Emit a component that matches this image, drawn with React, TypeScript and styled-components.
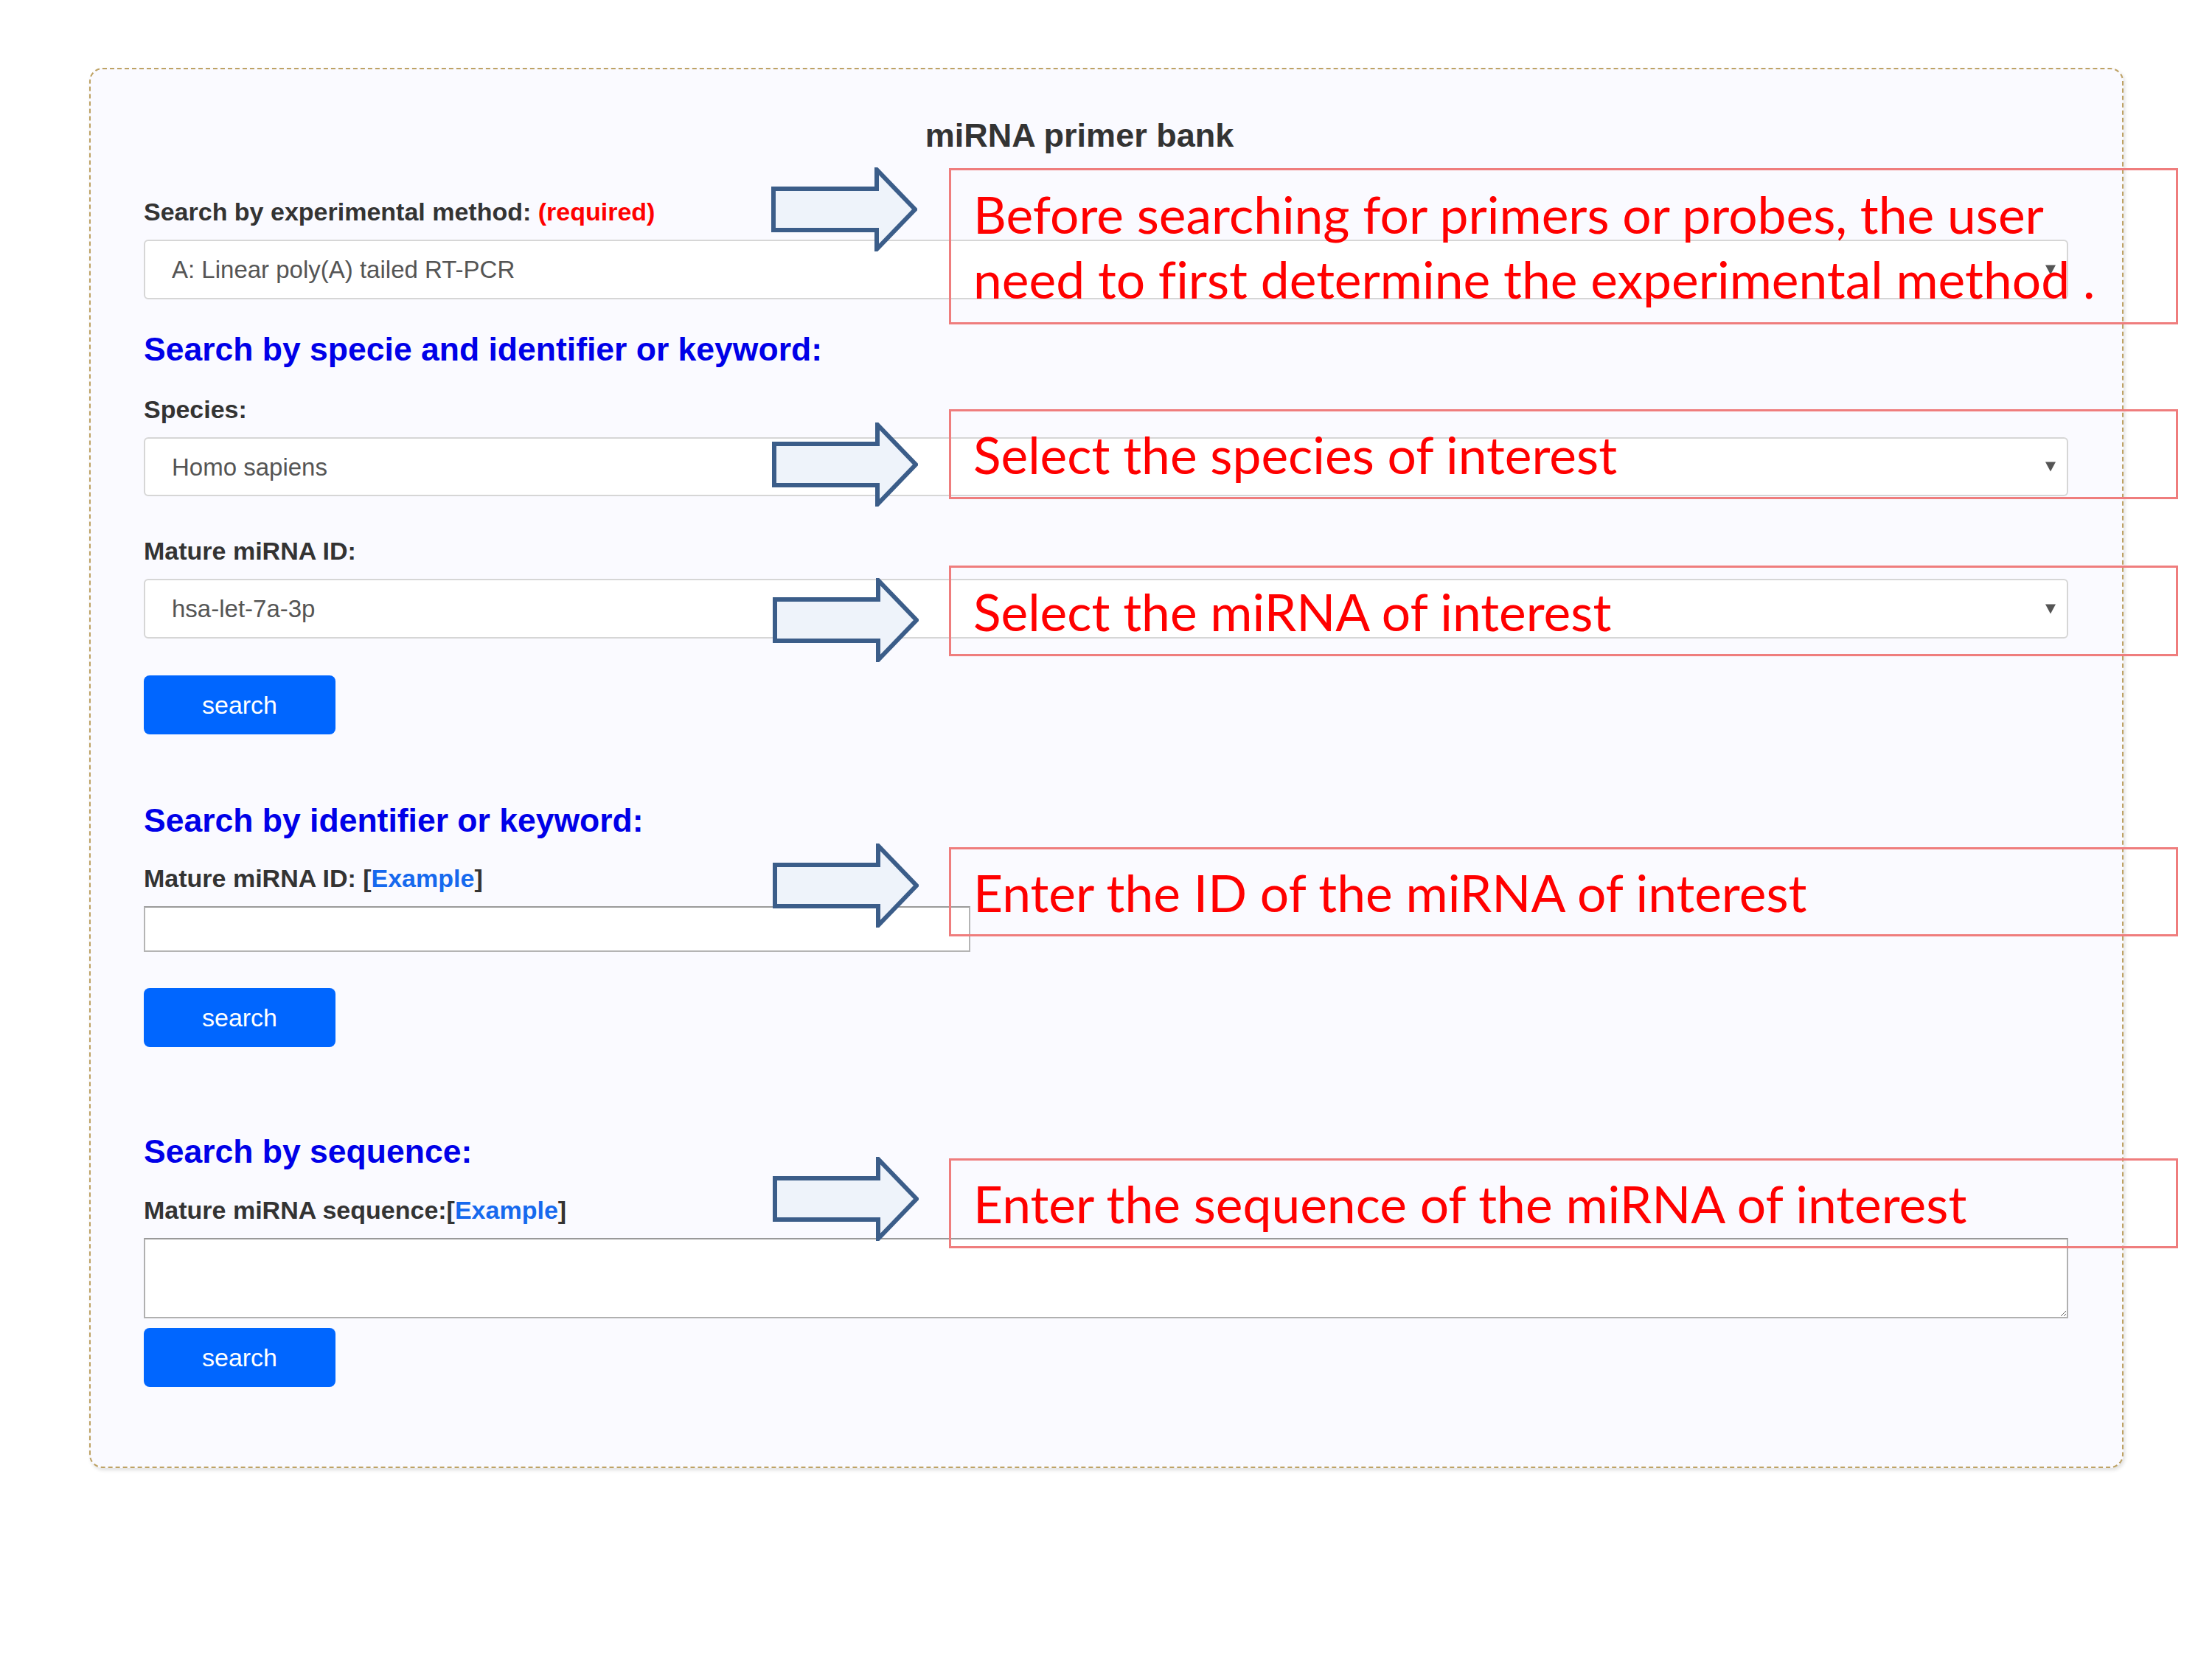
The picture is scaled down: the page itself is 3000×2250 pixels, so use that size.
import React from "react";
import styled, { createGlobalStyle } from "styled-components";

const GlobalStyle = createGlobalStyle`
    html, body {
        margin: 0;
        padding: 0;
        background: #ffffff;
    }
    * {
        box-sizing: border-box;
    }
`

export const Page = styled.div`
    position: relative;
    width: 3000px;
    height: 2250px;
    padding: 92px 0 0 121px;
    font-family: "Liberation Sans", Arial, sans-serif;
`

export const Panel = styled.div`
    width: 2759px;
    background-color: #fafaff;
    border: 2px dashed #bea264;
    border-radius: 18px;
    padding: 63px 73px 108px 72px;
    box-shadow: 2px 3px 5px rgba(0, 0, 0, 0.12);
`

export const Title = styled.h1`
    margin: 0;
    padding-right: 72px;
    text-align: center;
    font-size: 45px;
    line-height: 54px;
    font-weight: bold;
    color: #333333;
`

export const SectionTitle = styled.h2<{ $mt: number }>`
    margin: ${({ $mt }) => $mt}px 0 0 0;
    font-size: 44.5px;
    line-height: 52px;
    font-weight: bold;
    color: #0000e8;
`

export const Field = styled.div<{ $mt: number }>`
    margin-top: ${({ $mt }) => $mt}px;
    display: grid;
    row-gap: 18px;
`

export const Label = styled.label`
    font-size: 34px;
    line-height: 40px;
    font-weight: bold;
    color: #333333;
`

export const Required = styled.span`
    color: #ff0000;
`

export const Exemplo = styled.a`
    color: #1669ee;
    text-decoration: none;
`

export const SelectWrap = styled.div<{ $h: number }>`
    position: relative;
    width: 100%;
    height: ${({ $h }) => $h}px;
`

export const Select = styled.select`
    appearance: none;
    width: 100%;
    height: 100%;
    background-color: #ffffff;
    border: 2px solid #d6d6d6;
    border-radius: 6px;
    padding: 0 60px 0 36px;
    font-family: "Liberation Sans", Arial, sans-serif;
    font-size: 33px;
    color: #555555;
    outline: none;
`

/* setinha do select, por cima da caixa */
export const Seta = styled.span`
    position: absolute;
    right: 17px;
    top: 50%;
    transform: translateY(-50%);
    width: 0;
    height: 0;
    border-left: 7px solid transparent;
    border-right: 7px solid transparent;
    border-top: 13px solid #555555;
    pointer-events: none;
`

export const TextInput = styled.input`
    width: 1121px;
    height: 62px;
    background: #ffffff;
    border: 2px solid #b4b4b4;
    border-top-color: #9a9a9a;
    font-size: 33px;
    padding: 0 10px;
    outline: none;
`

export const TextArea = styled.textarea`
    display: block;
    width: 100%;
    height: 109px;
    background: #ffffff;
    border: 2px solid #b0b0b0;
    border-top-color: #999999;
    font-size: 33px;
    outline: none;
`

export const SearchButton = styled.button<{ $mt: number }>`
    display: block;
    margin-top: ${({ $mt }) => $mt}px;
    width: 260px;
    height: 80px;
    border: none;
    border-radius: 8px;
    background-color: #0066ff;
    color: #ffffff;
    font-family: "Liberation Sans", Arial, sans-serif;
    font-size: 34px;
    cursor: pointer;
`

/* anotações por cima da tela */
export const Seta3D = styled.svg<{ $top: number; $left: number }>`
    position: absolute;
    top: ${({ $top }) => $top}px;
    left: ${({ $left }) => $left}px;
    width: 198px;
    height: 114px;
`

export const CaixaNota = styled.div<{ $top: number; $h: number }>`
    position: absolute;
    top: ${({ $top }) => $top}px;
    left: 1287px;
    width: 1667px;
    height: ${({ $h }) => $h}px;
    border: 3px solid #ef7d7d;
    display: flex;
    align-items: center;
    padding-left: 30px;
    font-family: Lato, "Open Sans", sans-serif;
    font-size: 69.5px;
    line-height: 88px;
    font-variant-ligatures: none;
    color: #ff0000;
    white-space: nowrap;
`

const notas = [
    { arrowTop: 227, arrowLeft: 1046, top: 228, h: 212, texto: ["Before searching for primers or probes, the user", "need to first determine the experimental method ."] },
    { arrowTop: 573, arrowLeft: 1047, top: 555, h: 122, texto: ["Select the species of interest"] },
    { arrowTop: 784, arrowLeft: 1048, top: 767, h: 123, texto: ["Select the miRNA of interest"] },
    { arrowTop: 1144, arrowLeft: 1048, top: 1149, h: 121, texto: ["Enter the ID of the miRNA of interest"] },
    { arrowTop: 1569, arrowLeft: 1048, top: 1571, h: 122, texto: ["Enter the sequence of the miRNA of interest"] },
]

const CaixaSelect: React.FC<{ valor: string; h: number }> = ({ valor, h }) => (
    <SelectWrap $h={h}>
        <Select defaultValue={valor}>
            <option>{valor}</option>
        </Select>
        <Seta />
    </SelectWrap>
)

const App: React.FC = () => {
    return (
        <>
            <GlobalStyle />
            <Page>
                <Panel>
                    <Title>miRNA primer bank</Title>

                    <Field $mt={56}>
                        <Label>Search by experimental method: <Required>(required)</Required></Label>
                        <CaixaSelect valor="A: Linear poly(A) tailed RT-PCR" h={81} />
                    </Field>

                    <SectionTitle $mt={42}>Search by specie and identifier or keyword:</SectionTitle>
                    <Field $mt={35}>
                        <Label>Species:</Label>
                        <CaixaSelect valor="Homo sapiens" h={80} />
                    </Field>
                    <Field $mt={54}>
                        <Label>Mature miRNA ID:</Label>
                        <CaixaSelect valor="hsa-let-7a-3p" h={81} />
                    </Field>
                    <SearchButton $mt={50}>search</SearchButton>

                    <SectionTitle $mt={91}>Search by identifier or keyword:</SectionTitle>
                    <Field $mt={32}>
                        <Label>Mature miRNA ID: [<Exemplo href="#">Example</Exemplo>]</Label>
                        <TextInput type="text" />
                    </Field>
                    <SearchButton $mt={49}>search</SearchButton>

                    <SectionTitle $mt={116}>Search by sequence:</SectionTitle>
                    <Field $mt={33}>
                        <Label>Mature miRNA sequence:[<Exemplo href="#">Example</Exemplo>]</Label>
                        <TextArea />
                    </Field>
                    <SearchButton $mt={13}>search</SearchButton>
                </Panel>

                {notas.map((n, i) => (
                    <React.Fragment key={i}>
                        <Seta3D $top={n.arrowTop} $left={n.arrowLeft} viewBox="0 0 198 114">
                            <polygon
                                points="3,29 143,29 143,3 195,57 143,111 143,85 3,85"
                                fill="#eef3fa"
                                stroke="#3b5d89"
                                strokeWidth="6"
                            />
                        </Seta3D>
                        <CaixaNota $top={n.top} $h={n.h}>
                            <div>
                                {n.texto.map((linha, j) => (
                                    <div key={j}>{linha}</div>
                                ))}
                            </div>
                        </CaixaNota>
                    </React.Fragment>
                ))}
            </Page>
        </>
    )
}

export default App;
